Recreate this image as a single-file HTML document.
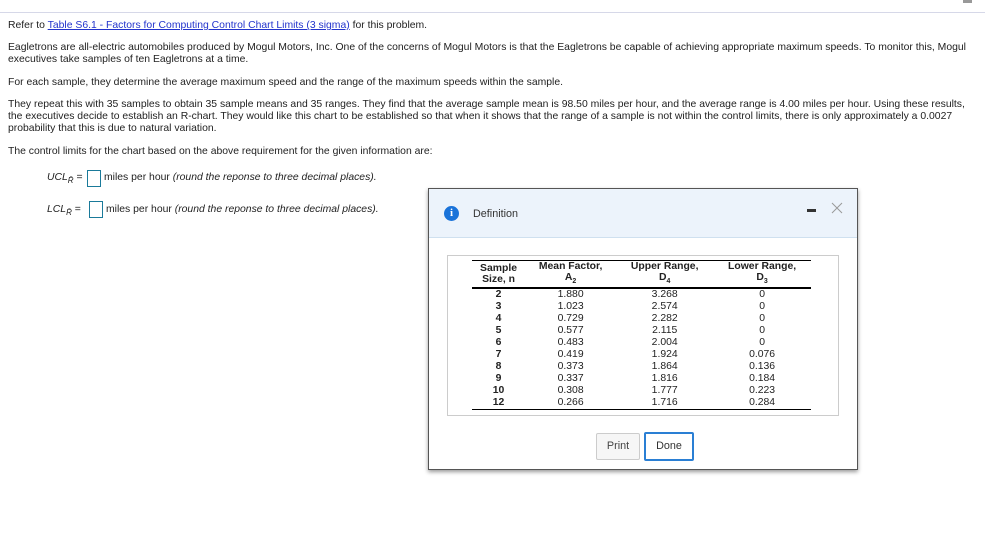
<!DOCTYPE html>
<html><head><style>
body{margin:0;width:985px;height:554px;background:#fff;font-family:"Liberation Sans",Arial,sans-serif;font-size:10.4px;color:#222;position:relative;overflow:hidden}
.t{position:absolute;left:8px;white-space:nowrap;line-height:12px}
a{color:#2233cc;text-decoration:underline}
.box{position:absolute;width:12px;height:15px;border:1px solid #1a7a9a}
.dlg{position:absolute;left:428px;top:188px;width:428px;height:280px;border:1px solid #555;background:#fff;box-shadow:0 2px 4px rgba(0,0,0,.4)}
.hdr{position:absolute;left:0;top:0;width:428px;height:48px;background:#ecf3fb;border-bottom:1px solid #cfe0ef}
table{border-collapse:collapse;font-size:10.4px;position:absolute;left:24px;top:4px;width:339px}
td,th{padding:0;line-height:12px;text-align:center}
th{font-weight:bold;line-height:11px}
.tb{position:absolute;left:18px;top:66px;width:390px;height:159px;border:1px solid #ccc}
.btn{position:absolute;top:244px;height:25px;line-height:25px;text-align:center;font-size:10.8px;border-radius:2px}
</style></head><body>
<div style="position:absolute;left:0;top:12px;width:985px;height:1px;background:#d6d8e8"></div>
<div style="position:absolute;left:963px;top:0;width:9px;height:3px;background:#999"></div>
<div class="t" style="top:20px">Refer to <a>Table S6.1 - Factors for Computing Control Chart Limits (3 sigma)</a> for this problem.</div>
<div class="t" style="top:42px">Eagletrons are all-electric automobiles produced by Mogul Motors, Inc. One of the concerns of Mogul Motors is that the Eagletrons be capable of achieving appropriate maximum speeds. To monitor this, Mogul<br>executives take samples of ten Eagletrons at a time.</div>
<div class="t" style="top:77px">For each sample, they determine the average maximum speed and the range of the maximum speeds within the sample.</div>
<div class="t" style="top:99px">They repeat this with 35 samples to obtain 35 sample means and 35 ranges. They find that the average sample mean is 98.50 miles per hour, and the average range is 4.00 miles per hour. Using these results,<br>the executives decide to establish an R-chart. They would like this chart to be established so that when it shows that the range of a sample is not within the control limits, there is only approximately a 0.0027<br>probability that this is due to natural variation.</div>
<div class="t" style="top:146px">The control limits for the chart based on the above requirement for the given information are:</div>
<div class="t" style="left:47px;top:172px"><i>UCL<sub style="font-size:8px">R̄</sub></i> =</div>
<div class="box" style="left:87px;top:170px"></div>
<div class="t" style="left:104px;top:172px">miles per hour <i>(round the reponse to three decimal places).</i></div>
<div class="t" style="left:47px;top:204px"><i>LCL<sub style="font-size:8px">R̄</sub></i> =</div>
<div class="box" style="left:89px;top:201px"></div>
<div class="t" style="left:106px;top:204px">miles per hour <i>(round the reponse to three decimal places).</i></div>

<div class="dlg">
<div class="hdr">
<div style="position:absolute;left:15px;top:17px;width:15px;height:15px;border-radius:50%;background:#1a73d9;color:#fff;font:bold 11px 'Liberation Serif',serif;text-align:center;line-height:15px">i</div>
<div style="position:absolute;left:44px;top:19px;font-size:10.8px;color:#333">Definition</div>
<div style="position:absolute;left:378px;top:20px;width:9px;height:3px;background:#333"></div>
<svg style="position:absolute;left:402px;top:13px" width="12" height="12"><path d="M1 1L11 11M11 1L1 11" stroke="#999" stroke-width="1"/></svg>
</div>
<div class="tb">
<table>
<tr style="border-top:1px solid #000;border-bottom:2px solid #000"><th>Sample<br>Size, n</th><th>Mean Factor,<br>A<sub style="font-size:7px">2</sub></th><th>Upper Range,<br>D<sub style="font-size:7px">4</sub></th><th>Lower Range,<br>D<sub style="font-size:7px">3</sub></th></tr>
<tr><td><b>2</b></td><td>1.880</td><td>3.268</td><td>0</td></tr>
<tr><td><b>3</b></td><td>1.023</td><td>2.574</td><td>0</td></tr>
<tr><td><b>4</b></td><td>0.729</td><td>2.282</td><td>0</td></tr>
<tr><td><b>5</b></td><td>0.577</td><td>2.115</td><td>0</td></tr>
<tr><td><b>6</b></td><td>0.483</td><td>2.004</td><td>0</td></tr>
<tr><td><b>7</b></td><td>0.419</td><td>1.924</td><td>0.076</td></tr>
<tr><td><b>8</b></td><td>0.373</td><td>1.864</td><td>0.136</td></tr>
<tr><td><b>9</b></td><td>0.337</td><td>1.816</td><td>0.184</td></tr>
<tr><td><b>10</b></td><td>0.308</td><td>1.777</td><td>0.223</td></tr>
<tr style="border-bottom:1px solid #000"><td><b>12</b></td><td>0.266</td><td>1.716</td><td>0.284</td></tr>
</table>
</div>
<div class="btn" style="left:167px;width:42px;border:1px solid #ccc;background:#f6f6f6;color:#444">Print</div>
<div class="btn" style="left:215px;width:46px;border:2px solid #2a7fd4;top:243px;color:#333">Done</div>
</div>
</body></html>
